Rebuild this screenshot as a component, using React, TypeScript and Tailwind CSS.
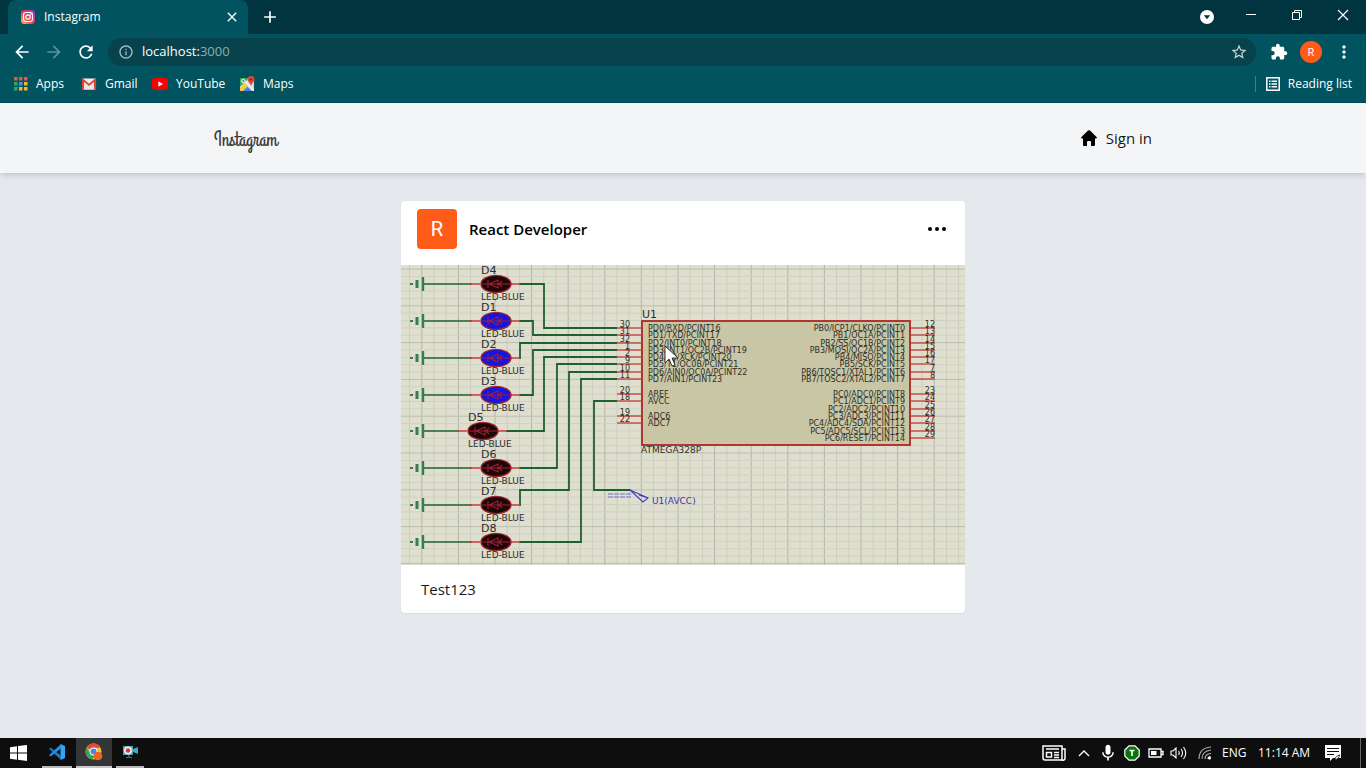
import React from "react";
import { MdArrowBack, MdArrowForward, MdRefresh, MdInfoOutline, MdStarBorder, MdExtension, MdMoreVert, MdClose, MdAdd, MdMic } from "react-icons/md";

const DARK = "#1d0606";
const BLUE = "#1515e0";

const leds = [
  { name: "D4", x: 95, y: 19, fill: DARK },
  { name: "D1", x: 95, y: 56, fill: BLUE },
  { name: "D2", x: 95, y: 93, fill: BLUE },
  { name: "D3", x: 95, y: 130, fill: BLUE },
  { name: "D5", x: 82, y: 166, fill: DARK },
  { name: "D6", x: 95, y: 203, fill: DARK },
  { name: "D7", x: 95, y: 240, fill: DARK },
  { name: "D8", x: 95, y: 277, fill: DARK },
];

const leftPins = [
  { n: "30", t: "PD0/RXD/PCINT16", y: 63 },
  { n: "31", t: "PD1/TXD/PCINT17", y: 70 },
  { n: "32", t: "PD2/INT0/PCINT18", y: 78 },
  { n: "1", t: "PD3/INT1/OC2B/PCINT19", y: 85 },
  { n: "2", t: "PD4/T0/XCK/PCINT20", y: 92 },
  { n: "9", t: "PD5/T1/OC0B/PCINT21", y: 99 },
  { n: "10", t: "PD6/AIN0/OC0A/PCINT22", y: 107 },
  { n: "11", t: "PD7/AIN1/PCINT23", y: 114 },
  { n: "20", t: "AREF", y: 129 },
  { n: "18", t: "AVCC", y: 136 },
  { n: "19", t: "ADC6", y: 151 },
  { n: "22", t: "ADC7", y: 158 },
];

const rightPins = [
  { n: "12", t: "PB0/ICP1/CLKO/PCINT0", y: 63 },
  { n: "13", t: "PB1/OC1A/PCINT1", y: 70 },
  { n: "14", t: "PB2/SS/OC1B/PCINT2", y: 78 },
  { n: "15", t: "PB3/MOSI/OC2A/PCINT3", y: 85 },
  { n: "16", t: "PB4/MISO/PCINT4", y: 92 },
  { n: "17", t: "PB5/SCK/PCINT5", y: 99 },
  { n: "7", t: "PB6/TOSC1/XTAL1/PCINT6", y: 107 },
  { n: "8", t: "PB7/TOSC2/XTAL2/PCINT7", y: 114 },
  { n: "23", t: "PC0/ADC0/PCINT8", y: 129 },
  { n: "24", t: "PC1/ADC1/PCINT9", y: 136 },
  { n: "25", t: "PC2/ADC2/PCINT10", y: 144 },
  { n: "26", t: "PC3/ADC3/PCINT11", y: 151 },
  { n: "27", t: "PC4/ADC4/SDA/PCINT12", y: 158 },
  { n: "28", t: "PC5/ADC5/SCL/PCINT13", y: 166 },
  { n: "29", t: "PC6/RESET/PCINT14", y: 173 },
];

const wires = [
  "M118 19H143V63H216",
  "M118 56H132V70H216",
  "M118 93H119V78H216",
  "M118 130H132V85H216",
  "M105 166H143V92H216",
  "M118 203H156V99H216",
  "M118 240H119V225H168V107H216",
  "M118 277H180V114H216",
  "M216 136H193V225H229",
];

function Circuit() {
  const cols = Array.from({ length: 46 }, (_, i) => 8.6 + i * 12.2);
  const rows = Array.from({ length: 41 }, (_, i) => 4 + i * 7.36);
  return (
    <svg viewBox="0 0 564 300" className="block w-full" role="img" aria-label="ATmega328P circuit">
      <rect width="564" height="300" fill="#dfdfcf" />
      {cols.map((x, i) => (
        <path key={x} d={`M${x} 0V300`} stroke={i % 3 === 1 ? "#b4b6a8" : "#cccdbe"} strokeWidth="1" />
      ))}
      {rows.map((y, i) => (
        <path key={y} d={`M0 ${y}H564`} stroke={i % 5 === 0 ? "#bbbdaf" : "#d0d1c2"} strokeWidth="1" />
      ))}
      <g fill="none" stroke="#20602f" strokeWidth="1.8">
        {wires.map((d) => <path key={d} d={d} />)}
      </g>
      <g fontFamily="DejaVu Sans, sans-serif" fill="#2e2e29">
        {leds.map((l) => (
          <g key={l.name}>
            <path d={`M22 ${l.y}H${l.x - 24}`} stroke="#20602f" strokeWidth="1.5" />
            <path d={`M22 ${l.y - 7}v14`} stroke="#387c51" strokeWidth="2.4" />
            <path d={`M16 ${l.y - 4}v8`} stroke="#387c51" strokeWidth="3" />
            <path d={`M9 ${l.y}h3`} stroke="#387c51" strokeWidth="2" />
            <path d={`M${l.x - 26} ${l.y}h10M${l.x + 14} ${l.y}h10`} stroke="#d33b36" strokeWidth="1.3" />
            <ellipse cx={l.x} cy={l.y} rx="15" ry="8.7" fill={l.fill} stroke="#a32331" strokeWidth="1.3" />
            <path d={`M${l.x - 14} ${l.y}h28M${l.x - 7} ${l.y}l9-4v8zM${l.x - 8} ${l.y - 4}v8M${l.x + 6} ${l.y - 3}l-3 3 3 3`} fill="none" stroke="#9f2038" strokeWidth="1.1" />
            <text x={l.x - 15} y={l.y - 10} fontSize="11">{l.name}</text>
            <text x={l.x - 15} y={l.y + 16} fontSize="9">LED-BLUE</text>
          </g>
        ))}
        <rect x="241" y="56" width="268" height="124" fill="#c8c6a5" stroke="#ad2623" strokeWidth="1.8" />
        <text x="241" y="53" fontSize="11">U1</text>
        <text x="240" y="188" fontSize="9">ATMEGA328P</text>
        {leftPins.map((p) => (
          <g key={p.n} fontSize="8">
            <path d={`M216 ${p.y}h25`} stroke="#c33b35" strokeWidth="1.3" />
            <text x="229" y={p.y - 1} textAnchor="end">{p.n}</text>
            <text x="247" y={p.y + 3}>{p.t}</text>
          </g>
        ))}
        {rightPins.map((p) => (
          <g key={p.n} fontSize="8">
            <path d={`M510 ${p.y}h24`} stroke="#c33b35" strokeWidth="1.3" />
            <text x="534" y={p.y - 1} textAnchor="end">{p.n}</text>
            <text x="504" y={p.y + 3} textAnchor="end">{p.t}</text>
          </g>
        ))}
        <path d="M437 74.500h10" stroke="#2e2e29" strokeWidth=".8" />
        <text x="251" y="239" fontSize="9" fill="#3936c4">U1(AVCC)</text>
      </g>
      <path d="M207 229h24M207 232h24" stroke="#6464cd" strokeWidth=".9" strokeDasharray="5 1" />
      <path d="M229 225l18 8-5 4zM238 230l9 3" fill="none" stroke="#3e3dcc" strokeWidth="1.1" />
      <path d="M264 81v17l4-4 3 7 3-1-3-7h6z" fill="#fff" stroke="#222" strokeWidth=".9" />
    </svg>
  );
}

function InstagramIcon() {
  return (
    <svg viewBox="0 0 16 16" className="size-4 shrink-0">
      <defs>
        <linearGradient id="ig" x1="0" y1="1" x2="1" y2="0">
          <stop offset="0" stopColor="#fdc44b" />
          <stop offset=".45" stopColor="#ee3e57" />
          <stop offset="1" stopColor="#8d3acb" />
        </linearGradient>
      </defs>
      <rect x="1" y="1" width="14" height="14" rx="3.500" fill="url(#ig)" />
      <rect x="3.500" y="3.500" width="9" height="9" rx="2.500" fill="none" stroke="#fff" strokeWidth="1.2" />
      <circle cx="8" cy="8" r="2.200" fill="none" stroke="#fff" strokeWidth="1.2" />
      <circle cx="10.800" cy="5.200" r=".7" fill="#fff" />
    </svg>
  );
}

function AppsIcon() {
  const colors = ["#e2574c", "#e2574c", "#e2574c", "#32a65a", "#4a90e8", "#f1b62f", "#32a65a", "#f1b62f", "#f1b62f"];
  return (
    <svg viewBox="0 0 14 14" className="size-3.5">
      {colors.map((c, i) => <rect key={i} x={(i % 3) * 5} y={Math.floor(i / 3) * 5} width="3.500" height="3.500" fill={c} />)}
    </svg>
  );
}

function GmailIcon() {
  return (
    <svg viewBox="0 0 16 12" className="h-3 w-4">
      <rect x="1" y="0.500" width="14" height="11" rx="1" fill="#f4efee" />
      <path d="M2 11.500V2l6 5 6-5v9.500" fill="none" stroke="#dc4437" strokeWidth="2.200" />
      <path d="M3.200 4v7.500h9.600V4L8 8z" fill="#ece6e5" />
    </svg>
  );
}

function YouTubeIcon() {
  return (
    <svg viewBox="0 0 16 12" className="h-3 w-4">
      <rect width="16" height="12" rx="3" fill="#f00" />
      <path d="M6.300 3.300v5.400L11 6z" fill="#fff" />
    </svg>
  );
}

function MapsIcon() {
  return (
    <svg viewBox="0 0 16 16" className="size-4">
      <path d="M1 2h14v13H1z" fill="#e9e9e7" />
      <path d="M1 2h9L1 11z" fill="#37a85b" />
      <path d="M1 12l5-5 3 3-5 5H1z" fill="#f7ca45" />
      <path d="M4 15l4.500-4.500L13 15z" fill="#4184ed" />
      <path d="M10 7l5 6v-8z" fill="#d9dad9" />
      <circle cx="4.300" cy="5" r="1.700" fill="none" stroke="#fff" />
      <path d="M12 0a3.500 3.500 0 0 0-3.500 3.500C8.500 6 11 7 12 10c1-3 3.500-4 3.500-6.500A3.500 3.500 0 0 0 12 0z" fill="#e04a3a" />
      <circle cx="12" cy="3.500" r="1.200" fill="#8c2018" />
    </svg>
  );
}

function ChromeIcon() {
  return (
    <svg viewBox="0 0 18 18" className="size-[18px]">
      <circle cx="8.500" cy="8.500" r="8" fill="#f2c12e" />
      <path d="M8.500 8.500L1.600 4.500A8 8 0 0 1 15.500 4.700H8.500z" fill="#e14a3b" />
      <path d="M1.600 4.500A8 8 0 0 0 7.500 16.400L11 10.500l-6-.5z" fill="#35a352" />
      <circle cx="8.500" cy="8.500" r="3.900" fill="#fff" />
      <circle cx="8.500" cy="8.500" r="3" fill="#4688ee" />
      <circle cx="13" cy="13" r="4.300" fill="#ee6323" />
    </svg>
  );
}

function CodeIcon() {
  return (
    <svg viewBox="0 0 18 18" className="size-[18px]">
      <path d="M12.500 1L17 3v12l-4.500 2z" fill="#36a4ee" />
      <path d="M1 5.800L2.600 4.500 13 12.500V17z" fill="#1679c4" />
      <path d="M1 12.200l1.600 1.300L13 5.500V1z" fill="#258fdc" />
    </svg>
  );
}

const bookmarks = [
  { label: "Apps", icon: <AppsIcon />, width: "w-[67px]" },
  { label: "Gmail", icon: <GmailIcon />, width: "w-[71px]" },
  { label: "YouTube", icon: <YouTubeIcon />, width: "w-[87px]" },
  { label: "Maps", icon: <MapsIcon />, width: "w-[70px]" },
];

function Browser() {
  return (
    <header className="text-xs text-white">
      <div className="flex h-[34px] bg-[#00343e]">
        <div className="ml-2 flex w-60 items-center rounded-t-lg bg-[#00535f] pr-2 pl-3">
          <InstagramIcon />
          <span className="ml-2 grow">Instagram</span>
          <button aria-label="Close tab"><MdClose className="size-4" /></button>
        </div>
        <button aria-label="New tab" className="ml-3"><MdAdd className="size-5" /></button>
        <div className="ml-auto flex items-center">
          <button aria-label="Search tabs" className="mr-3.5">
            <svg viewBox="0 0 14 14" className="size-3.5"><circle cx="7" cy="7" r="7" fill="#fff" /><path d="M3.800 5.200h6.400L7 9.200z" fill="#00343e" /></svg>
          </button>
          <button aria-label="Minimize" className="flex w-[46px] justify-center pb-1">
            <svg viewBox="0 0 12 12" className="size-3"><path d="M1 5.500h10" stroke="#fff" /></svg>
          </button>
          <button aria-label="Restore" className="flex w-[46px] justify-center pb-1">
            <svg viewBox="0 0 12 12" className="size-3" fill="none" stroke="#fff"><path d="M1.500 3.500h7v7h-7zM3.500 3.500v-2h7v7h-2" /></svg>
          </button>
          <button aria-label="Close" className="flex w-[46px] justify-center pb-1">
            <svg viewBox="0 0 12 12" className="size-3"><path d="M1 1l10 10M11 1L1 11" stroke="#fff" strokeWidth="1.200" /></svg>
          </button>
        </div>
      </div>
      <div className="flex h-9 items-center bg-[#00535f] px-3">
        <div className="flex w-24 items-center gap-3">
          <button aria-label="Back"><MdArrowBack className="size-5" /></button>
          <button aria-label="Forward" className="text-[#5f9199]"><MdArrowForward className="size-5" /></button>
          <button aria-label="Reload"><MdRefresh className="size-5" /></button>
        </div>
        <div className="flex h-7 grow items-center rounded-full bg-[#08424c] pr-2 pl-2.5">
          <MdInfoOutline className="size-4 text-[#a5bdc3]" />
          <a href="#address" className="ml-2 grow text-[13px]">localhost:<span className="text-[#8fadb3]">3000</span></a>
          <button aria-label="Bookmark this tab" className="text-[#c8d8dc]"><MdStarBorder className="size-[18px]" /></button>
        </div>
        <button aria-label="Extensions" className="ml-3.5"><MdExtension className="size-[18px]" /></button>
        <button className="ml-3 size-[22px] rounded-full bg-[#ff5c1a] text-[11px]">R</button>
        <button aria-label="Menu" className="ml-3"><MdMoreVert className="size-5" /></button>
      </div>
      <div className="flex h-[33px] items-center border-b border-[#004650] bg-[#00535f] px-3.5 pb-1">
        {bookmarks.map((b) => (
          <a key={b.label} href="#bookmark" className={`flex items-center gap-2 ${b.width}`}>{b.icon}{b.label}</a>
        ))}
        <button className="ml-auto flex items-center gap-2 border-l border-[#39818b] pl-2.5">
          <svg viewBox="0 0 14 14" className="size-3.5" fill="none" stroke="#fff" strokeWidth="1.500"><rect x=".8" y=".8" width="12.400" height="12.400" /><path d="M3 4.200h1.500M5.500 4.200H11M3 7h1.500M5.500 7H11M3 9.800h1.500M5.500 9.800H11" /></svg>
          Reading list
        </button>
      </div>
    </header>
  );
}

function Taskbar() {
  return (
    <footer className="flex h-[30px] items-stretch bg-[#0e0e0f] text-xs text-white">
      <button aria-label="Start" className="flex w-9 items-center justify-center">
        <svg viewBox="0 0 17 16" className="h-4 w-[17px]" fill="#fff"><path d="M0 2.300l7-1v6.300H0zM8 1.100L17 0v7.600H8zM0 8.500h7v6.200l-7-1zM8 8.500h9V16l-9-1.200z" /></svg>
      </button>
      <button aria-label="Visual Studio Code" className="ml-1.5 flex w-[30px] items-center justify-center border-b-2 border-[#b9b9b9]"><CodeIcon /></button>
      <button aria-label="Chrome" className="ml-1 flex w-9 items-center justify-center border-b-2 border-[#c9c9c9] bg-[#343536]"><ChromeIcon /></button>
      <button aria-label="Recorder" className="ml-1 flex w-7 items-center justify-center border-b-2 border-[#b9b9b9]">
        <svg viewBox="0 0 17 14" className="h-3.5 w-[17px]"><path d="M1 1h10v3l5-2v7l-5-2v3H1z" fill="#43a5b5" /><circle cx="6" cy="5.500" r="4" fill="#eee" /><circle cx="6" cy="5.500" r="2.300" fill="#df3833" /><path d="M7 10v2M4 13l3-1 3 1" stroke="#3d8e9a" fill="none" /></svg>
      </button>
      <div className="ml-auto flex items-center">
        <svg viewBox="0 0 24 16" className="h-4 w-6" fill="none" stroke="#fff" strokeWidth="1.500"><path d="M1 1h19v14H3a2 2 0 0 1-2-2zM20 4h3v9a2 2 0 0 1-3 2M4 4h13M12 7.500h5M12 10h5M12 12.500h5" /><rect x="4.500" y="7.500" width="5" height="4.500" /></svg>
        <svg viewBox="0 0 12 8" className="ml-3 h-2 w-3" fill="none" stroke="#fff" strokeWidth="1.300"><path d="M1 7l5-5 5 5" /></svg>
        <MdMic className="ml-2 size-5" />
        <svg viewBox="0 0 16 16" className="ml-1.5 size-4"><path d="M5 .8h6L15.200 5v6L11 15.200H5L.8 11V5z" fill="#08750e" stroke="#fff" strokeWidth="1.200" /><path d="M5.500 5.500h5M8 5.500V11" stroke="#fff" strokeWidth="1.600" /></svg>
        <svg viewBox="0 0 16 10" className="ml-2 h-2.5 w-4"><path d="M1 1h12v8H1zM13 3.500h2v3h-2" fill="none" stroke="#fff" strokeWidth="1.300" /><path d="M3 3h5.500v4H3z" fill="#fff" /></svg>
        <svg viewBox="0 0 18 14" className="ml-1.5 h-3.5 w-[18px]" fill="none" stroke="#fff" strokeWidth="1.100"><path d="M1 5h2l3-3v10L3 9H1zM8.500 5q1.500 2 0 4M11 3q3 4 0 8M13.500 1q4.500 6 0 12" /></svg>
        <svg viewBox="0 0 14 14" className="ml-2.5 size-3.5" fill="none" stroke="#aaa" strokeWidth="1.200"><path d="M1 13Q1 2 13 1M4 13Q4 5 13 4M7 13Q7 8 13 7.500" /><path d="M10 13Q10 11 12.500 10.500" stroke="#fff" /><circle cx="11.500" cy="12" r="1.500" fill="#fff" stroke="none" /></svg>
        <span className="ml-2.5 w-9">ENG</span>
        <span className="w-[66px]">11:14 AM</span>
        <svg viewBox="0 0 18 16" className="h-4 w-[18px]"><path d="M1 0h16v13h-8l-3 3v-3H1z" fill="#fff" /><path d="M3 3.500h12M3 6.500h12M3 9.500h7" stroke="#111" strokeWidth="1.200" /><path d="M11 15q0-4 5-5-1 4-5 5" fill="#fff" stroke="#111" strokeWidth=".8" /></svg>
        <span className="ml-[18px] h-[30px] w-1.5 border-l border-[#666]" />
      </div>
    </footer>
  );
}

export default function App() {
  return (
    <div className="flex min-h-screen flex-col bg-[#e5e8ec] font-['Open_Sans','Noto_Sans',sans-serif] text-[#18191b]">
      <Browser />
      <nav className="bg-[#f4f5f7] shadow-md">
        <div className="mx-auto flex h-[70px] max-w-[938px] items-center justify-between">
          <a href="#home" className="pt-1 font-['Grand_Hotel',cursive] text-xl font-medium text-[#3c3c3e]">Instagram</a>
          <a href="#signin" className="flex items-center gap-2 text-[15px]">
            <svg viewBox="0 0 18 18" className="size-[18px]"><path d="M9 1.200q.6 0 1 .4l6.800 6.700q.6 1-.6 1.200H15V16q0 1-1 1h-3v-4q0-1-1-1H8q-1 0-1 1v4H4q-1 0-1-1V9.500H1.800q-1.200-.2-.6-1.200L8 1.600q.4-.4 1-.4z" fill="#000" /></svg>
            Sign in
          </a>
        </div>
      </nav>
      <main className="grow px-4 py-7">
        <article className="mx-auto max-w-[564px] overflow-hidden rounded-sm bg-white shadow-xs">
          <div className="flex h-16 items-center px-4 pb-2">
            <span className="flex size-10 items-center justify-center rounded-sm bg-[#ff5c1a] font-[Roboto,sans-serif] text-xl text-white">R</span>
            <h2 className="ml-3 grow text-[15px] font-semibold text-black">React Developer</h2>
            <button aria-label="More options"><svg viewBox="0 0 24 6" className="h-1.5 w-6"><circle cx="5" cy="3" r="2" /><circle cx="12" cy="3" r="2" /><circle cx="19" cy="3" r="2" /></svg></button>
          </div>
          <Circuit />
          <p className="px-5 py-3 text-[15px] leading-6">Test123</p>
        </article>
      </main>
      <Taskbar />
    </div>
  );
}
